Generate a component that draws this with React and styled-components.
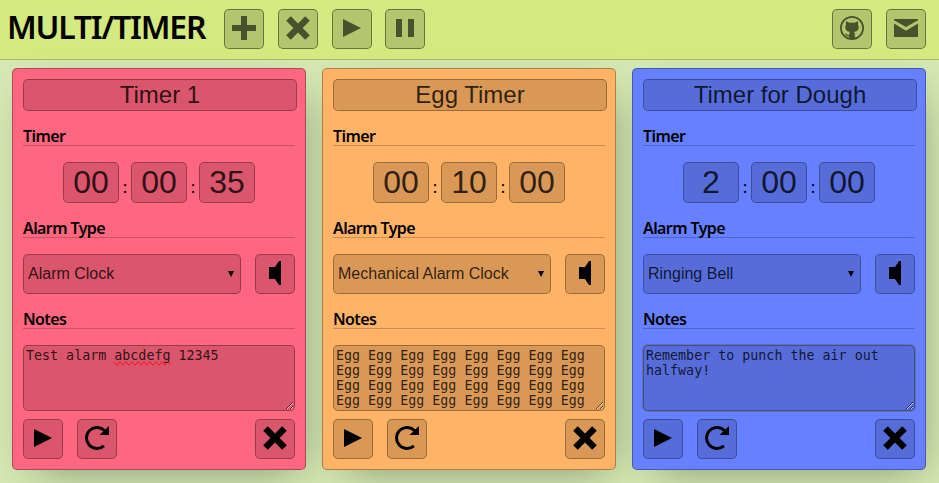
import React from 'react';
import styled, { createGlobalStyle } from 'styled-components';

const Global = createGlobalStyle`
  *, *::before, *::after { box-sizing: border-box; }
  html, body, #root { height: 100%; }
  body { margin: 0; overflow: hidden; background: #d3e8b2; color: #000; font-family: "Noto Sans", sans-serif; }
`;

const Page = styled.div`
  height: 483px;
  display: flex;
  flex-direction: column;
  overflow: hidden;
`;

const Header = styled.header`
  height: 60px;
  flex: none;
  display: flex;
  align-items: flex-start;
  padding: 9px 13px 0 7px;
  background: #d4e980;
  border-bottom: 1px solid #a9ba66;
`;

const Logo = styled.h1`
  margin: 0;
  width: 217px;
  font-size: 32px;
  line-height: 35px;
  font-weight: 600;
  letter-spacing: -1.2px;
  white-space: nowrap;
`;

const Actions = styled.div`
  display: flex;
  gap: ${(p) => (p.$end ? 14 : 13.8)}px;
  margin-left: ${(p) => (p.$end ? 'auto' : '0')};
`;

const IconButton = styled.button`
  width: 40px;
  height: 40px;
  flex: none;
  display: flex;
  align-items: center;
  justify-content: center;
  padding: 0 0 2px;
  color: #000;
  background: rgba(0, 0, 0, 0.15);
  border: 1px solid rgba(0, 0, 0, 0.3);
  border-radius: 5px;
  margin-left: ${(p) => (p.$end ? 'auto' : '0')};
`;

const HeaderButton = styled(IconButton)`
  color: #4a522d;
  border-color: rgba(0, 0, 0, 0.42);
`;

const Icon = styled.svg`
  width: 24px;
  height: 24px;
  display: block;
  fill: currentColor;
`;

const Cards = styled.main`
  display: flex;
  gap: 16px;
  padding: 8px 12px 0;
`;

const Card = styled.section`
  width: 294px;
  height: 402px;
  flex: none;
  display: flex;
  flex-direction: column;
  padding: 10px;
  background: ${(p) => p.$color};
  border: 1px solid rgba(0, 0, 0, 0.3);
  border-radius: 5px;
  box-shadow: 8px 14px 40px -16px rgba(0, 0, 0, 0.4);
`;

const Field = styled.input`
  display: block;
  flex: none;
  margin: 0;
  padding: 0;
  color: rgba(0, 0, 0, 0.8);
  background: rgba(0, 0, 0, 0.15);
  border: 1px solid rgba(0, 0, 0, 0.3);
  border-radius: 5px;
  text-align: center;
  outline: none;
  font-family: "Liberation Sans", sans-serif;
`;

const Title = styled(Field)`
  width: 274px;
  height: 32px;
  font-size: 24px;
`;

const Label = styled.h2`
  flex: none;
  height: 23px;
  margin: 12px 0 16px;
  border-bottom: 1px solid rgba(0, 0, 0, 0.2);
  font-size: 16px;
  line-height: 27px;
  font-weight: 600;
  letter-spacing: -0.6px;
`;

const Clock = styled.div`
  height: 41px;
  display: flex;
  justify-content: center;
`;

const Digits = styled(Field)`
  width: 56px;
  height: 41px;
  font-size: 32px;
`;

const Colon = styled.span`
  width: 12px;
  padding: 13px 0 0;
  text-align: center;
  font-size: 17px;
  line-height: 24px;
`;

const Row = styled.div`
  display: flex;
  gap: 14px;
  margin-top: ${(p) => p.$top || 0}px;
`;

const Select = styled.div`
  width: 218px;
  height: 40px;
  display: flex;
  align-items: center;
  justify-content: space-between;
  padding: 0 6px 0 4px;
  color: rgba(0, 0, 0, 0.8);
  background: rgba(0, 0, 0, 0.15);
  border: 1px solid rgba(0, 0, 0, 0.3);
  border-radius: 5px;
  font: 16px "Liberation Sans", sans-serif;
`;

const Caret = styled.svg`
  width: 6px;
  height: 6px;
  fill: #000;
`;

const Notes = styled.div`
  height: 66px;
  flex: none;
  padding: 2px;
  overflow: hidden;
  resize: both;
  color: rgba(0, 0, 0, 0.8);
  background: rgba(0, 0, 0, 0.15);
  border: 1px solid rgba(0, 0, 0, 0.3);
  border-radius: 5px;
  box-shadow: ${(p) => (p.$focused ? '0 0 0 1px rgba(110, 110, 130, 0.75)' : 'none')};
  font: 13.333px/15px "DejaVu Sans Mono", monospace;
  white-space: pre-wrap;
`;

const Misspelt = styled.span`
  text-decoration-line: spelling-error;
`;

const Plus = () => <Icon viewBox="0 0 24 24"><path d="M9 0h6v9h9v6h-9v9H9v-9H0V9h9z" /></Icon>;
const Cross = () => <Icon viewBox="0 0 24 24"><path d="M4.8.2 12 7.4 19.2.2l4.6 4.6L16.6 12l7.2 7.2-4.6 4.6L12 16.6l-7.2 7.2L.2 19.2 7.4 12 .2 4.8z" /></Icon>;
const Play = () => <Icon viewBox="0 0 24 24"><path d="M3 3 21 12 3 21z" /></Icon>;
const Pause = () => <Icon viewBox="0 0 24 24"><path d="M3 3h6v18H3zM15 3h6v18h-6z" /></Icon>;
const Mail = () => <Icon viewBox="0 0 24 24"><path d="M0 3h24v1.2L12 11 0 4.2zM0 7.5l12 7.2 12-7.2V21H0z" /></Icon>;
const Speaker = () => <Icon viewBox="0 0 24 24"><path d="M6 6h6l4-6h2v24h-2l-4-6H6z" /></Icon>;
const Reload = () => (
  <Icon viewBox="0 0 24 24">
    <path d="M18.9 19.9A10.5 10.5 0 1 1 19.6 4.7" fill="none" stroke="currentColor" strokeWidth="3" />
    <path d="M24 0v9h-9.5z" />
  </Icon>
);
const Github = () => (
  <Icon viewBox="0 0 24 24">
    <circle cx="12" cy="12" r="11.1" fill="none" stroke="currentColor" strokeWidth="1.8" />
    <path d="M6.2 5.2 9.4 6.7Q12 6.1 14.6 6.7L17.8 5.2Q18.5 7 18 8.5 19 10 18.6 12.3 18 15.6 14 16 14.8 16.8 14.8 18V22.6H9.2V20.2C6.4 20.8 6.2 18.5 4.8 17.9 7.2 17.3 7 19.6 9.2 18.8Q9.2 16.8 10 16 6 15.6 5.4 12.3 5 10 6 8.5 5.5 7 6.2 5.2Z" />
  </Icon>
);

const egg = Array(4).fill(Array(8).fill('Egg').join(' ')).join('\n');

const timers = [
  { name: 'Timer 1', color: '#ff6680', time: ['00', '00', '35'], alarm: 'Alarm Clock', notes: <>Test alarm <Misspelt>abcdefg</Misspelt> 12345</> },
  { name: 'Egg Timer', color: '#ffb366', time: ['00', '10', '00'], alarm: 'Mechanical Alarm Clock', notes: egg },
  { name: 'Timer for Dough', color: '#6680ff', time: ['2', '00', '00'], alarm: 'Ringing Bell', notes: 'Remember to punch the air out halfway!', focused: true },
];

function Timer({ timer }) {
  return (
    <Card $color={timer.color}>
      <Title defaultValue={timer.name} />
      <Label>Timer</Label>
      <Clock>
        {timer.time.map((value, i) => (
          <React.Fragment key={i}>
            {i > 0 && <Colon>:</Colon>}
            <Digits defaultValue={value} />
          </React.Fragment>
        ))}
      </Clock>
      <Label>Alarm Type</Label>
      <Row>
        <Select>
          {timer.alarm}
          <Caret viewBox="0 0 6 6"><path d="M0 0h6L3 6z" /></Caret>
        </Select>
        <IconButton><Speaker /></IconButton>
      </Row>
      <Label>Notes</Label>
      <Notes $focused={timer.focused}>{timer.notes}</Notes>
      <Row $top={8}>
        <IconButton><Play /></IconButton>
        <IconButton><Reload /></IconButton>
        <IconButton $end><Cross /></IconButton>
      </Row>
    </Card>
  );
}

export default function App() {
  return (
    <Page>
      <Global />
      <Header>
        <Logo>MULTI/TIMER</Logo>
        <Actions>
          <HeaderButton><Plus /></HeaderButton>
          <HeaderButton><Cross /></HeaderButton>
          <HeaderButton><Play /></HeaderButton>
          <HeaderButton><Pause /></HeaderButton>
        </Actions>
        <Actions $end>
          <HeaderButton><Github /></HeaderButton>
          <HeaderButton><Mail /></HeaderButton>
        </Actions>
      </Header>
      <Cards>
        {timers.map((timer) => <Timer key={timer.name} timer={timer} />)}
      </Cards>
    </Page>
  );
}
